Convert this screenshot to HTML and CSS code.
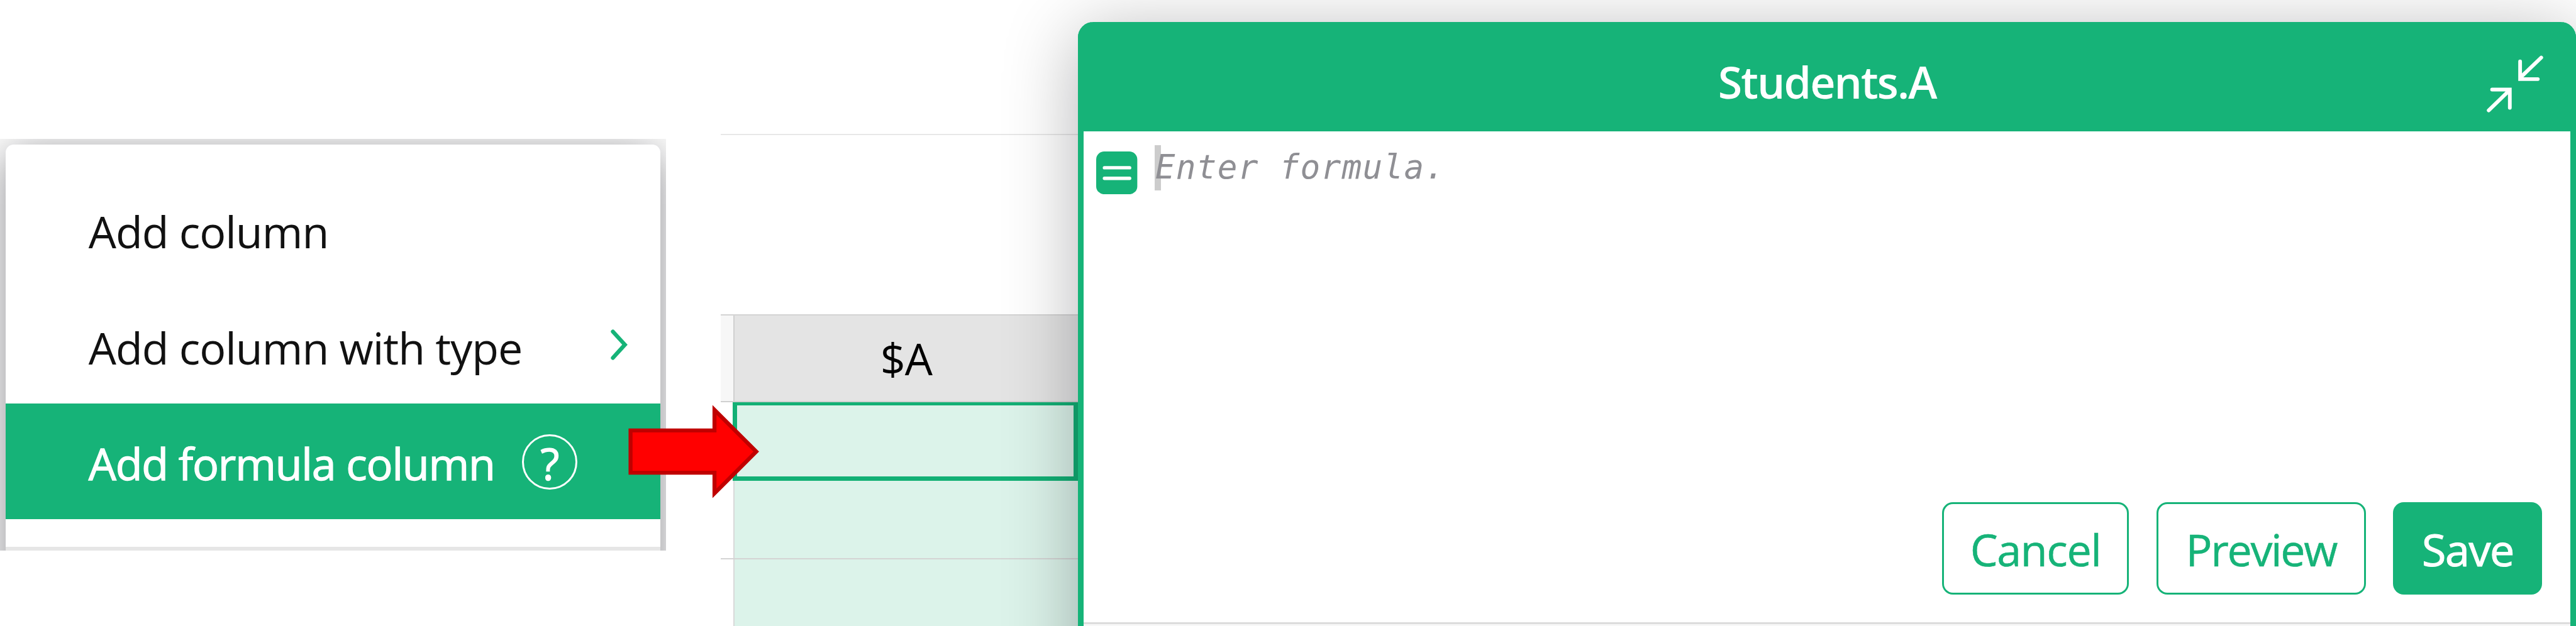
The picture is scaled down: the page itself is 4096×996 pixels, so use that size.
FILE: index.html
```html
<!DOCTYPE html>
<html lang="en">
<head>
<meta charset="utf-8">
<title>Students.A</title>
<link rel="stylesheet" href="styles.css">
</head>
<body>
<main class="page">
  <div class="menu-frame">
    <nav class="menu">
      <div class="menu-item">Add column</div>
      <div class="menu-item submenu">
        <span>Add column with type</span>
        <svg class="chevron" viewBox="0 0 32 56"><path d="M5 5L26 28L5 51"/></svg>
      </div>
      <div class="menu-item active">
        <span>Add formula column</span>
        <span class="help">?</span>
      </div>
      <div class="menu-divider"></div>
    </nav>
  </div>

  <section class="sheet">
    <div class="band band-top"></div>
    <div class="band band-mid"></div>
    <div class="row head"><div class="gutter"></div><div class="cell">$A</div></div>
    <div class="row first"><div class="gutter"></div><div class="cell selected"></div></div>
    <div class="row second"><div class="gutter"></div><div class="cell"></div></div>
    <div class="row last"><div class="gutter"></div><div class="cell"></div></div>
  </section>

  <section class="dialog">
    <header class="dialog-head">
      <h1 class="dialog-title">Students.A</h1>
      <svg class="collapse" viewBox="0 0 100 100">
        <path d="M95.500 4L60 38M58.500 10.700V41.700H89.500"/>
        <path d="M3.500 96.500L39 62M9.500 60H40.500V92"/>
      </svg>
    </header>
    <div class="dialog-body">
      <div class="formula">
        <svg class="equals" viewBox="0 0 72 75">
          <rect class="equals-box" width="72" height="75" rx="14"/>
          <path d="M14.500 28.500H58.500M14.500 47H58.500"/>
        </svg>
        <div class="input"><span class="caret"></span><span class="placeholder">Enter formula.</span></div>
      </div>
      <div class="buttons">
        <button class="btn cancel">Cancel</button>
        <button class="btn preview">Preview</button>
        <button class="btn save">Save</button>
      </div>
    </div>
    <footer class="dialog-foot"></footer>
  </section>

  <svg class="arrow" viewBox="0 0 240 180">
    <path d="M9.500 49.500H156.500V13.400L229.600 86.500L156.500 159.600V123.500H9.500Z"/>
  </svg>
</main>
</body>
</html>
```
FILE: styles.css
```css
* { box-sizing: border-box; }

body {
  margin: 0;
  height: 996px;
  overflow: hidden;
  background: #fff;
}

.page {
  position: relative;
  display: flex;
  width: 4511px;
  height: 1097px;
  overflow: hidden;
  zoom: 0.908;
  font-family: "Open Sans", "Noto Sans", sans-serif;
  font-size: 77px;
  color: #111;
}

svg { display: block; fill: none; flex: none; }

/* context menu */
.menu-frame {
  flex: none;
  width: 1166px;
  height: 722px;
  margin-top: 243px;
  padding: 10px 10px 0;
  overflow: hidden;
}
.menu {
  height: 820px;
  padding-top: 48px;
  border-radius: 14px;
  background: #fff;
  box-shadow: 0 14px 80px rgba(0, 0, 10, 0.46);
}
.menu-item {
  display: flex;
  align-items: flex-start;
  height: 203px;
  padding-left: 145px;
  line-height: 209px;
  letter-spacing: -1.1px;
  white-space: pre;
}
.submenu { justify-content: space-between; padding-right: 56px; }
.chevron {
  width: 32px;
  height: 56px;
  margin-top: 72px;
  stroke: #16b378;
  stroke-width: 7;
  stroke-linecap: round;
}
.active {
  background: #16b378;
  color: #fff;
  letter-spacing: -1.35px;
  -webkit-text-stroke: 1.4px #fff;
}
.help {
  width: 97px;
  height: 97px;
  margin: 54px 0 0 48px;
  border: 4px solid #fff;
  border-radius: 50%;
  line-height: 94px;
  text-align: center;
  letter-spacing: 0;
}
.menu-divider { height: 8px; margin-top: 48px; background: #e6e6e6; }

/* spreadsheet */
.sheet {
  flex: none;
  display: flex;
  flex-direction: column;
  width: 626px;
  margin-left: 96px;
}
.band-top { height: 237px; border-bottom: 3px solid #e8e8e8; }
.band-mid { height: 316px; border-bottom: 3px solid #d4d4d4; }
.row { display: flex; }
.gutter { width: 24px; border-right: 3px solid #d9d9d9; }
.cell { flex: 1; background: #dcf3ea; }
.head { height: 152px; border-bottom: 3px solid #d0d0d0; }
.head .gutter { background: #f7f7f7; border-color: #d0d0d0; }
.head .cell {
  background: #e4e4e4;
  line-height: 149px;
  text-align: center;
  letter-spacing: -1px;
  color: #000;
}
.first { height: 137px; }
.first .gutter { width: 21px; border: 0; }
.selected { border: 8px solid #12b075; border-top-width: 6px; }
.second { height: 138px; border-bottom: 3px solid #d4d4d4; }
.last { height: 117px; }

/* formula editor */
.dialog {
  position: relative;
  flex: none;
  display: flex;
  flex-direction: column;
  width: 2623px;
  height: 1200px;
  margin-top: 38px;
  border-radius: 27px 27px 0 0;
  border: solid #16b378;
  border-width: 0 10px;
  background: #fff;
  box-shadow: 0 20px 130px rgba(0, 0, 10, 0.3);
}
.dialog-head {
  display: grid;
  grid-template-columns: 1fr auto 1fr;
  height: 192px;
  margin: 0 -10px;
  border-radius: 27px 27px 0 0;
  background: #16b378;
}
.dialog-title {
  grid-column: 2;
  margin: 0;
  font-size: 77px;
  font-weight: 600;
  line-height: 209px;
  letter-spacing: -2.1px;
  color: #fff;
}
.collapse {
  justify-self: end;
  width: 100px;
  height: 100px;
  margin: 59px 56px 0 0;
  stroke: #fff;
  stroke-width: 6.5;
  stroke-linecap: round;
}
.dialog-body {
  display: flex;
  flex-direction: column;
  justify-content: space-between;
  height: 860px;
  padding: 24px 49px 48px 22px;
}
.formula { display: flex; }
.equals {
  width: 72px;
  height: 75px;
  margin-top: 11px;
  stroke: #fff;
  stroke-width: 6;
  stroke-linecap: round;
}
.equals-box { fill: #16b378; stroke: none; }
.input {
  display: flex;
  margin-left: 30px;
  height: 80px;
}
.caret { width: 11px; background: #ccc; }
.placeholder {
  position: relative;
  margin-left: -10px;
  font: italic 58px/76px "DejaVu Sans Mono", monospace;
  letter-spacing: 1.4px;
  color: #8f8f94;
}
.buttons {
  display: flex;
  justify-content: flex-end;
  gap: 48px;
}
.btn {
  height: 162px;
  padding: 3px 0 0;
  border: 4px solid #16b378;
  border-radius: 19px;
  background: #fff;
  font: inherit;
  line-height: 151px;
  color: #16b378;
  -webkit-text-stroke: 0.6px currentColor;
}
.cancel { width: 327px; letter-spacing: -1.5px; }
.preview { width: 367px; letter-spacing: -2.6px; }
.save {
  width: 261px;
  background: #16b378;
  color: #fff;
  letter-spacing: -1.5px;
  -webkit-text-stroke-width: 1.2px;
}
.dialog-foot { height: 100px; border-top: 4px solid #dcdcdc; background: #f7f7f7; }

/* red pointer lying across the menu and the sheet */
.arrow {
  position: absolute;
  left: 1095px;
  top: 705px;
  width: 240px;
  height: 180px;
}
.arrow path { fill: #f00; stroke: #c00000; stroke-width: 7; stroke-miterlimit: 10; }
```
